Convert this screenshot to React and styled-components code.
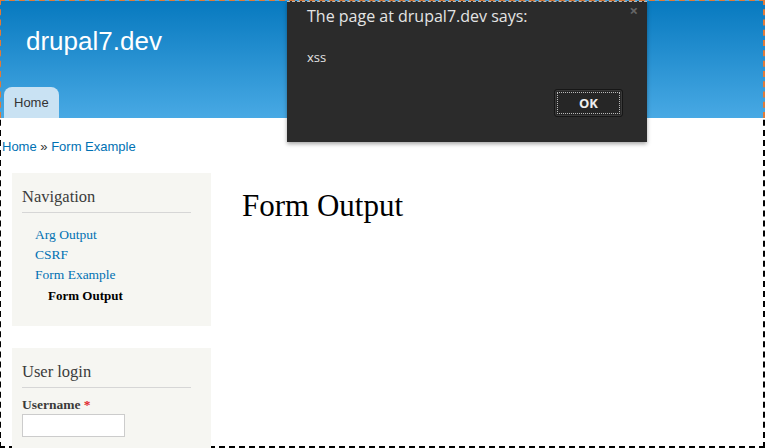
import React from "react";
import styled, { createGlobalStyle } from "styled-components";

const GlobalStyle = createGlobalStyle`
  html, body {
    margin: 0;
    padding: 0;
    background: #fff;
    overflow: hidden;
  }
  * {
    box-sizing: border-box;
  }
`;

const Page = styled.div`
  position: relative;
  width: 766px;
  height: 449px;
  margin: -1px 0 0 -1px;
  border: 2px dashed #000;
  font-family: "Liberation Sans", Arial, sans-serif;
`;

const Header = styled.header`
  margin: -2px -2px 0;
  height: 119px;
  border: 2px dashed #e07b39;
  border-bottom: none;
  background: linear-gradient(to bottom, #0779bf 0%, #48a9e4 100%);
  display: flex;
  flex-direction: column;
  justify-content: space-between;
`;

const SiteName = styled.a`
  color: #fff;
  font-size: 26px;
  margin: 27px 0 0 25px;
  text-decoration: none;
  line-height: 1;
`;

const Tabs = styled.ul`
  display: flex;
  margin: 0;
  padding: 0 0 0 3px;
  list-style: none;
`;

const Tab = styled.li`
  background: #c9e2f3;
  color: #333;
  font-size: 13px;
  padding: 9px 10px 9px 10px;
  border-radius: 8px 8px 0 0;
  line-height: 13px;
`;

const Breadcrumb = styled.div`
  margin: 21px 0 0 1px;
  font-size: 13px;
  line-height: 16px;
  color: #333;
  a {
    color: #0071b3;
    text-decoration: none;
  }
`;

const Main = styled.div`
  display: flex;
  margin-top: 18px;
  padding-left: 11px;
`;

const Sidebar = styled.aside`
  width: 199px;
  display: flex;
  flex-direction: column;
  gap: 22px;
`;

const Block = styled.section`
  background: #f6f6f2;
  padding: 14px 20px 22px 10px;
`;

const BlockTitle = styled.h2`
  margin: 0;
  font-family: "Liberation Serif", Georgia, serif;
  font-weight: normal;
  font-size: 16.5px;
  color: #3b3b3b;
  line-height: 20px;
  padding-bottom: 5px;
  border-bottom: 1px solid #d6d6d6;
`;

const Menu = styled.ul`
  list-style: none;
  margin: 14px 0 0;
  padding: 0 0 0 13px;
  display: flex;
  flex-direction: column;
  gap: 4px;
`;

const MenuItem = styled.li`
  font-family: "Liberation Serif", Georgia, serif;
  font-size: ${(p) => (p.$active ? 13 : 13.5)}px;
  line-height: 16px;
  padding-left: ${(p) => (p.$depth ? 13 : 0)}px;
  margin-top: ${(p) => (p.$depth ? 1 : 0)}px;
  color: ${(p) => (p.$active ? "#000" : "#0071b3")};
  font-weight: ${(p) => (p.$active ? "bold" : "normal")};
`;

const Label = styled.label`
  display: block;
  margin-top: 9px;
  font-family: "Liberation Serif", Georgia, serif;
  font-weight: bold;
  font-size: 13.5px;
  color: #3b3b3b;
  line-height: 16px;
  span {
    color: #e0252b;
  }
`;

const Input = styled.input`
  display: block;
  margin-top: 1px;
  width: 103px;
  height: 23px;
  border: 1px solid #ccc;
  background: #fff;
`;

const Content = styled.div`
  padding: 15px 0 0 31px;
`;

const Title = styled.h1`
  margin: 0;
  font-family: "Liberation Serif", Georgia, serif;
  font-weight: normal;
  font-size: 31px;
  color: #000;
  line-height: 36px;
`;

const Dialog = styled.div`
  position: absolute;
  top: 0;
  left: 286px;
  width: 360px;
  height: 141px;
  background: #2b2b2b;
  border-top: 1px dashed #bbb;
  box-shadow: 0 2px 4px rgba(0, 0, 0, 0.35);
  font-family: "Open Sans", "Noto Sans", sans-serif;
  color: #e4e4e4;
  display: flex;
  flex-direction: column;
  padding: 3px 24px 0 20px;
`;

const DialogTitle = styled.div`
  font-size: 16px;
  line-height: 22px;
`;

const DialogMessage = styled.div`
  font-size: 13px;
  margin-top: 21px;
  line-height: 18px;
`;

const DialogFooter = styled.div`
  display: flex;
  justify-content: flex-end;
  margin-top: 23px;
`;

const OkButton = styled.button`
  width: 69px;
  height: 28px;
  flex: none;
  background: #262626;
  border: 1px solid #161616;
  border-radius: 3px;
  box-shadow: inset 0 0 0 1px #3a3a3a;
  padding: 2px;
  font-family: "Open Sans", "Noto Sans", sans-serif;
  font-weight: bold;
  font-size: 13px;
  color: #eee;
  span {
    display: flex;
    align-items: center;
    justify-content: center;
    height: 100%;
    border: 1px dotted #bbb;
  }
`;

const Close = styled.div`
  position: absolute;
  top: 1px;
  right: 9px;
  font-size: 15px;
  font-weight: bold;
  color: #666;
  line-height: 15px;
`;

export default function App() {
  return (
    <>
      <GlobalStyle />
      <Page>
        <Header>
          <SiteName href="#">drupal7.dev</SiteName>
          <Tabs>
            <Tab>Home</Tab>
          </Tabs>
        </Header>
        <Breadcrumb>
          <a href="#">Home</a> » <a href="#">Form Example</a>
        </Breadcrumb>
        <Main>
          <Sidebar>
            <Block>
              <BlockTitle>Navigation</BlockTitle>
              <Menu>
                <MenuItem>Arg Output</MenuItem>
                <MenuItem>CSRF</MenuItem>
                <MenuItem>Form Example</MenuItem>
                <MenuItem $depth={1} $active>
                  Form Output
                </MenuItem>
              </Menu>
            </Block>
            <Block>
              <BlockTitle>User login</BlockTitle>
              <Label>
                Username <span>*</span>
              </Label>
              <Input type="text" />
            </Block>
          </Sidebar>
          <Content>
            <Title>Form Output</Title>
          </Content>
        </Main>
        <Dialog>
          <Close>×</Close>
          <DialogTitle>The page at drupal7.dev says:</DialogTitle>
          <DialogMessage>xss</DialogMessage>
          <DialogFooter>
            <OkButton>
              <span>OK</span>
            </OkButton>
          </DialogFooter>
        </Dialog>
      </Page>
    </>
  );
}
